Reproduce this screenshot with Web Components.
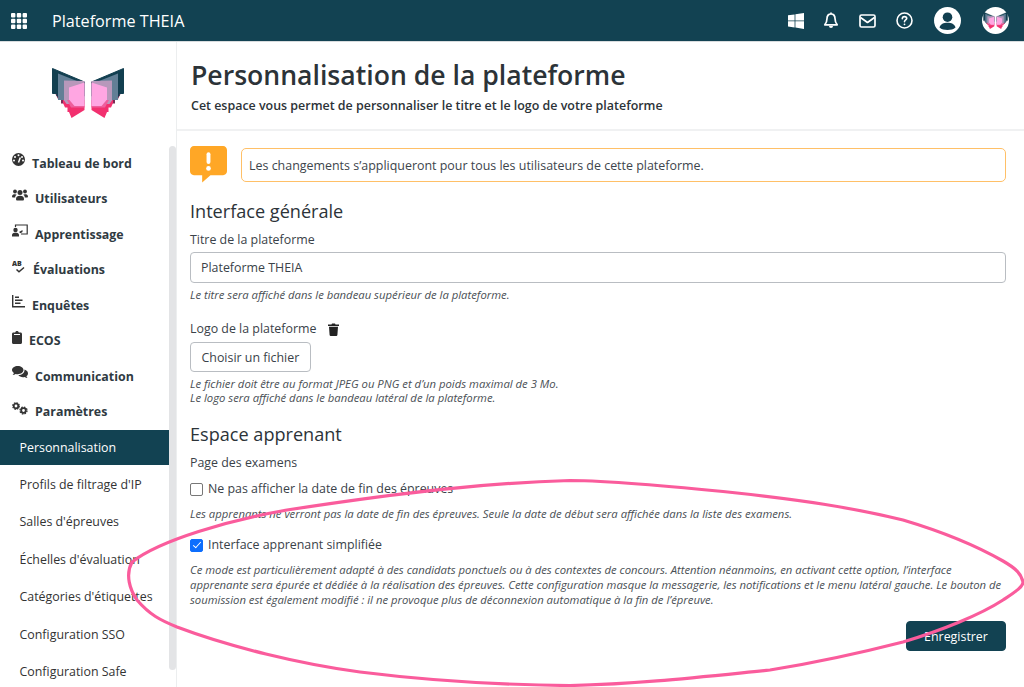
<!DOCTYPE html>
<html lang="fr"><head><meta charset="utf-8"><title>Plateforme THEIA</title>
<style>
html,body{margin:0;padding:0;height:687px;overflow:hidden;background:#fff;font-family:"Open Sans",sans-serif;color:#333}
</style></head><body>
<theia-app></theia-app>
<script>
const WING=`<path fill="#7a2a55" d="M55 93 58 99H61V103.500H66V93Z"/>
<path fill="#f2306f" d="M63 103 65 107.500H67.500V112H69L71.500 118 84.500 110V100H63Z"/>
<path fill="#123f50" stroke="#123f50" stroke-width="1" stroke-linejoin="round" d="M52.500 68.500 84.500 82V96H57V93.500H52.500Z"/>
<path fill="#627f96" d="M58 73.500 84.500 84V100H58Z"/>
<path fill="#b898bb" d="M64 80.500 84.500 81V104H66.500L64 100.500Z"/>
<path fill="#ee5f9d" d="M67 100 71 107.500H84.500V100Z"/>
<path fill="#ffa6e2" d="M69 87.500 84.500 82.500V106H74.500L69 99.500Z"/>`;
const BUTTERFLY=`<g>${WING}</g><g transform="translate(176 0) scale(-1 1)">${WING}</g>`;
const ICONS={
grid:'<svg width="16" height="16" viewBox="0 0 16 16" fill="#fff"><rect x="0" y="0" width="4.400" height="4.400" rx="1"/><rect x="5.800" y="0" width="4.400" height="4.400" rx="1"/><rect x="11.600" y="0" width="4.400" height="4.400" rx="1"/><rect x="0" y="5.800" width="4.400" height="4.400" rx="1"/><rect x="5.800" y="5.800" width="4.400" height="4.400" rx="1"/><rect x="11.600" y="5.800" width="4.400" height="4.400" rx="1"/><rect x="0" y="11.600" width="4.400" height="4.400" rx="1"/><rect x="5.800" y="11.600" width="4.400" height="4.400" rx="1"/><rect x="11.600" y="11.600" width="4.400" height="4.400" rx="1"/></svg>',
windows:'<svg width="16" height="16" viewBox="0 0 16 16" fill="#fff"><path d="M0 2.300 6.600 1.400V7.400H0ZM7.400 1.300 16 0V7.400H7.400ZM0 8.300H6.600V14.400L0 13.500ZM7.400 8.300H16V16L7.400 14.600Z"/></svg>',
bell:'<svg width="16" height="17" viewBox="0 0 16 17" fill="none" stroke="#fff" stroke-width="1.700" stroke-linejoin="round"><path d="M8 2C5.200 2 4 4.200 4 6.500 4 9.500 3.200 11 1.800 12.800H14.200C12.800 11 12 9.500 12 6.500 12 4.200 10.800 2 8 2Z"/><path d="M8 .5V2"/><path fill="#fff" stroke="none" d="M6 14H10A2 2 0 0 1 6 14Z"/></svg>',
mail:'<svg width="17" height="14" viewBox="0 0 17 14" fill="none" stroke="#fff" stroke-width="1.700" stroke-linejoin="round"><rect x="1" y="1" width="15" height="12" rx="1.500"/><path d="M1.500 3.500 8.500 8.500 15.500 3.500"/></svg>',
help:'<svg width="17" height="17" viewBox="0 0 17 17" fill="none" stroke="#fff" stroke-width="1.600"><circle cx="8.500" cy="8.500" r="7.500"/><path stroke-linecap="round" d="M6.300 6.700C6.300 5.300 7.300 4.600 8.500 4.600S10.700 5.400 10.700 6.500C10.700 8 8.500 8 8.500 9.800"/><circle cx="8.500" cy="12.300" r=".9" fill="#fff" stroke="none"/></svg>',
user:'<svg width="27" height="27" viewBox="0 0 27 27"><circle cx="13.500" cy="13.500" r="13.500" fill="#fff"/><circle cx="13.500" cy="10.200" r="4.800" fill="#123f50"/><path fill="#123f50" d="M5.500 20.500C6.500 17 9.500 15.800 13.500 15.800S20.500 17 21.500 20.500C19.500 22.300 16.700 23 13.500 23S7.500 22.300 5.500 20.500Z"/></svg>',
logoRound:`<svg width="27" height="27" viewBox="0 0 27 27"><circle cx="13.500" cy="13.500" r="13.500" fill="#fff"/><g transform="translate(-16.400 -18.200) scale(.34)">${BUTTERFLY}</g></svg>`,
gauge:'<svg width="13" height="13" viewBox="0 0 13 13"><circle cx="6.500" cy="6.500" r="6.500" fill="#333"/><g fill="#fff"><circle cx="6.500" cy="2.300" r="1"/><circle cx="3" cy="4" r="1"/><circle cx="10" cy="4" r="1"/><circle cx="2" cy="7.500" r="1"/><circle cx="11" cy="7.500" r="1"/></g><path stroke="#fff" stroke-width="1.500" d="M6.500 9.500 8.300 4.500"/></svg>',
users:'<svg width="16" height="13" viewBox="0 0 16 13" fill="#333"><circle cx="3" cy="2.500" r="1.900"/><circle cx="13" cy="2.500" r="1.900"/><circle cx="8" cy="3.500" r="2.500"/><path d="M0 7.500C0 5.800 1.300 5.200 3 5.200 3.800 5.200 4.300 5.400 4.700 5.700 3.700 6.300 3.300 7 3.200 8.500H.8C.3 8.500 0 8.100 0 7.500ZM16 7.500C16 5.800 14.700 5.200 13 5.200 12.200 5.200 11.700 5.400 11.300 5.700 12.300 6.300 12.700 7 12.800 8.500H15.200C15.700 8.500 16 8.100 16 7.500ZM4 10C4 7.500 5.500 6.700 8 6.700S12 7.500 12 10C12 11 11.500 11.500 10.500 11.500H5.500C4.500 11.500 4 11 4 10Z"/></svg>',
learn:'<svg width="16" height="13" viewBox="0 0 16 13"><path fill="none" stroke="#333" stroke-width="1.200" d="M3.500 3V1H15.200V10H9"/><circle cx="3.500" cy="6" r="2.200" fill="#333"/><path fill="#333" d="M0 12.500V11C0 9.300 1.500 8.700 3.500 8.700S7 9.300 7 11V12.500ZM7 8 10.500 6V8L8.500 9.200Z"/></svg>',
ab:'<svg width="14" height="13" viewBox="0 0 14 13"><text x="0" y="6" font-family="Open Sans" font-size="7" font-weight="800" fill="#333">AB</text><path fill="none" stroke="#333" stroke-width="1.500" d="M4.500 9.500 7 11.800 12 7.500"/></svg>',
chart:'<svg width="13" height="13" viewBox="0 0 13 13" fill="#333"><path d="M0 0H1.400V11H13V12.400H0Z"/><rect x="3" y="1.500" width="4" height="1.500"/><rect x="3" y="4.500" width="7.500" height="1.500"/><rect x="3" y="7.500" width="5.500" height="1.500"/></svg>',
clip:'<svg width="10" height="13" viewBox="0 0 10 13" fill="#333"><path d="M1.500 1.500H3.200C3.400.5 4.100 0 5 0S6.600.5 6.800 1.500H8.500C9.400 1.500 10 2.100 10 3V11.500C10 12.400 9.400 13 8.500 13H1.500C.6 13 0 12.400 0 11.500V3C0 2.100.6 1.500 1.500 1.500Z"/><rect x="2" y="3" width="6" height="1" fill="#fff"/></svg>',
chat:'<svg width="16" height="13" viewBox="0 0 16 13" fill="#333"><path d="M5.800 0C9 0 11.500 1.800 11.500 4.100S9 8.200 5.800 8.200C5 8.200 4.300 8.100 3.700 7.900 2.800 8.500 1.700 8.900.6 8.900 1.300 8.300 1.800 7.600 1.900 6.900.7 6.200 0 5.200 0 4.100 0 1.800 2.600 0 5.800 0Z"/><path d="M12.500 3.600C14.600 4.300 16 5.700 16 7.400 16 8.500 15.400 9.400 14.400 10.100 14.500 10.800 14.900 11.400 15.500 12 14.500 12 13.500 11.600 12.700 11 12.200 11.200 11.600 11.200 11 11.200 9 11.200 7.200 10.400 6.300 9.300 9.900 9.200 12.800 7 12.500 3.600Z"/></svg>',
cogs:'<svg width="16" height="13" viewBox="0 0 16 13" fill="none" stroke="#333"><circle cx="4" cy="4" r="2.300" stroke-width="1.800"/><circle cx="4" cy="4" r="3.300" stroke-width="1.200" stroke-dasharray="1.500 1.100"/><circle cx="11.500" cy="8.500" r="2.300" stroke-width="1.800"/><circle cx="11.500" cy="8.500" r="3.500" stroke-width="1.300" stroke-dasharray="1.600 1.150"/></svg>',
trash:'<svg width="11" height="13" viewBox="0 0 11 13" fill="#222"><path d="M0 1.500H3.500L4 .5H7L7.500 1.500H11V3H0ZM1 3.800H10L9.400 12C9.300 12.700 8.900 13 8.300 13H2.700C2.100 13 1.700 12.700 1.600 12Z"/></svg>',
alert:'<svg width="38" height="38" viewBox="0 0 38 38"><path fill="#ffa726" d="M4 0H34C36.200 0 38 1.800 38 4V26C38 28.200 36.200 30 34 30H21L12.500 37.500V30H4C1.800 30 0 28.200 0 26V4C0 1.800 1.800 0 4 0Z"/><rect x="17" y="6.500" width="4" height="12" rx="2" fill="#fff"/><circle cx="19" cy="23" r="2.400" fill="#fff"/></svg>'
};
function el(name,html,css){
  customElements.define(name,class extends HTMLElement{
    constructor(){super();const r=this.attachShadow({mode:'open'});r.innerHTML='<style>'+css+'</style>'+(typeof html==='function'?html(this):html);}
  });
}
el('top-bar',()=>`<div class="l">${ICONS.grid}<span>Plateforme THEIA</span></div><div class="r"><i style="width:16px">${ICONS.windows}</i><i style="margin-left:19px;width:16px">${ICONS.bell}</i><i style="margin-left:20px;width:17px">${ICONS.mail}</i><i style="margin-left:20px;width:17px">${ICONS.help}</i><i style="margin-left:21px;width:27px">${ICONS.user}</i><i style="margin-left:21px;width:27px">${ICONS.logoRound}</i></div>`,
`:host{display:flex;justify-content:space-between;align-items:center;height:41px;background:#124252;color:#fff;padding:0 15px 0 11px;box-sizing:border-box;box-shadow:0 1px 0 #d8dcde}
.l{display:flex;align-items:center}.l span{margin-left:25px;font-size:16.200px;font-weight:500}
.r{display:flex;align-items:center}i{display:flex;justify-content:center}svg{display:block}`);
el('theia-logo',`<svg width="176" height="120" viewBox="0 42 176 120">${BUTTERFLY}</svg>`,
`:host{display:block;height:120px}svg{display:block}`);
el('nav-item',()=>`<span class="ic"><slot name="icon"></slot></span><span class="t"><slot></slot></span>`,
`:host{display:flex;align-items:center;height:35.500px;padding-left:12px;font-size:12.400px;font-weight:700;color:#2f3a42}
.t{margin-left:7px}.ic{display:flex;margin-top:-3px}`);
el('sub-item',`<slot></slot>`,
`:host{display:flex;align-items:center;height:37.500px;padding-left:19.500px;font-size:12.400px;color:#333;white-space:nowrap}
:host([active]){background:#124252;color:#fff;height:35px;margin-bottom:1px}`);
el('side-bar',`<theia-logo></theia-logo><div class="nav"><slot></slot></div><div class="thumb"></div>`,
`:host{display:block;position:relative;width:176px;flex:none;overflow:hidden;height:645px;box-sizing:border-box}
.nav{margin-top:-16.500px;width:169px}
.thumb{position:absolute;left:169px;top:104px;width:7px;height:524px;background:#e3e4e6;border-radius:4px}`);
el('page-head',`<h1><slot></slot></h1><p><slot name="sub"></slot></p>`,
`:host{display:block;padding:16px 14px 17px 14px;border-bottom:2px solid #f0f1f2;height:89px;box-sizing:border-box}
h1{margin:0;font-size:26.600px;font-weight:600;line-height:34px;color:#2c3338}p{margin:5px 0 0;font-size:12.450px;font-weight:600;line-height:18px;color:#2c3338}`);
el('alert-box',()=>`<div class="a">${ICONS.alert}</div><div class="b"><slot></slot></div>`,
`:host{display:flex;align-items:flex-start;gap:14px;margin-top:15px}.a{width:37px;height:38px}.a svg{display:block;width:37px;height:37px}
.b{flex:1;height:34px;margin-top:2px;box-sizing:border-box;border:1px solid #ffc067;border-radius:5px;padding:0 7px;display:flex;align-items:center;font-size:12.450px;color:#3d454c}`);
el('sec-title',`<slot></slot>`,`:host{display:block;font-size:18.100px;line-height:24px;color:#2c3338}`);
el('field-label',`<slot></slot>`,`:host{display:block;font-size:12.400px;line-height:18px;color:#3a4249}`);
el('help-text',`<slot></slot>`,`:host{display:block;font-size:11.300px;line-height:14px;font-style:italic;color:#4a4f55}`);
el('text-input',`<input aria-label="Titre" value="Plateforme THEIA">`,`:host{display:block}input{display:block;width:100%;box-sizing:border-box;height:31px;border:1px solid #b9bdc2;border-radius:4px;padding:0 10px;font:12.400px "Open Sans",sans-serif;color:#3a4249;background:#fff;outline:0}`);
el('check-row',`<span class="c"></span><span class="t"><slot></slot></span>`,
`:host{display:flex;align-items:center;font-size:12.400px;line-height:18px;color:#3a4249}
.c{width:11px;height:11px;border:1px solid #777;border-radius:2px;background:#fff;margin-right:5px;flex:none;position:relative}
:host([checked]) .c{background:#0d6efd;border-color:#0d6efd}
:host([checked]) .c::after{content:"";position:absolute;left:3.500px;top:.5px;width:3px;height:7px;border:solid #fff;border-width:0 1.600px 1.600px 0;transform:rotate(42deg)}`);
el('action-btn',`<slot></slot>`,`:host{display:inline-flex;align-items:center;justify-content:center;box-sizing:border-box;height:30px;border:1px solid #b9bdc2;border-radius:4px;font-size:12.400px;color:#3a4249;padding:0 10.500px;background:#fff}
:host([primary]){background:#124252;border-color:#124252;color:#fff;width:100px;padding:0;height:30px}`);
el('theia-app',()=>`<top-bar></top-bar>
<div class="body">
<side-bar>
<nav-item><span slot="icon" class="ic">${ICONS.gauge}</span>Tableau de bord</nav-item>
<nav-item><span slot="icon">${ICONS.users}</span>Utilisateurs</nav-item>
<nav-item><span slot="icon">${ICONS.learn}</span>Apprentissage</nav-item>
<nav-item><span slot="icon">${ICONS.ab}</span>Évaluations</nav-item>
<nav-item><span slot="icon">${ICONS.chart}</span>Enquêtes</nav-item>
<nav-item><span slot="icon">${ICONS.clip}</span>ECOS</nav-item>
<nav-item><span slot="icon">${ICONS.chat}</span>Communication</nav-item>
<nav-item><span slot="icon">${ICONS.cogs}</span>Paramètres</nav-item>
<sub-item active>Personnalisation</sub-item>
<sub-item>Profils de filtrage d'IP</sub-item>
<sub-item>Salles d'épreuves</sub-item>
<sub-item>Échelles d'évaluation</sub-item>
<sub-item>Catégories d'étiquettes</sub-item>
<sub-item>Configuration SSO</sub-item>
<sub-item>Configuration Safe</sub-item>
</side-bar>
<main>
<page-head>Personnalisation de la plateforme<span slot="sub">Cet espace vous permet de personnaliser le titre et le logo de votre plateforme</span></page-head>
<div class="content">
<alert-box>Les changements s’appliqueront pour tous les utilisateurs de cette plateforme.</alert-box>
<sec-title style="margin-top:15px">Interface générale</sec-title>
<field-label style="margin-top:8px">Titre de la plateforme</field-label>
<text-input style="margin-top:3px"></text-input>
<help-text style="margin-top:5px">Le titre sera affiché dans le bandeau supérieur de la plateforme.</help-text>
<div class="logo-row"><field-label>Logo de la plateforme</field-label>${ICONS.trash}</div>
<action-btn style="margin-top:4px">Choisir un fichier</action-btn>
<help-text style="margin-top:5px">Le fichier doit être au format JPEG ou PNG et d’un poids maximal de 3 Mo.<br>Le logo sera affiché dans le bandeau latéral de la plateforme.</help-text>
<sec-title style="margin-top:17px">Espace apprenant</sec-title>
<field-label style="margin-top:8px">Page des examens</field-label>
<check-row style="margin-top:8px">Ne pas afficher la date de fin des épreuves</check-row>
<help-text style="margin-top:9px">Les apprenants ne verront pas la date de fin des épreuves. Seule la date de début sera affichée dans la liste des examens.</help-text>
<check-row checked style="margin-top:15px">Interface apprenant simplifiée</check-row>
<help-text style="margin-top:8px;line-height:15px">Ce mode est particulièrement adapté à des candidats ponctuels ou à des contextes de concours. Attention néanmoins, en activant cette option, l’interface apprenante sera épurée et dédiée à la réalisation des épreuves. Cette configuration masque la messagerie, les notifications et le menu latéral gauche. Le bouton de soumission est également modifié : il ne provoque plus de déconnexion automatique à la fin de l’épreuve.</help-text>
<div class="actions"><action-btn primary>Enregistrer</action-btn></div>
</div>
</main>
</div>
<svg class="ring" width="1024" height="687" viewBox="0 0 1024 687" aria-hidden="true"><path d="M570 480.500C490 483 410 491 287 510 230 520 160 540 132 562 125 575 130 590 137 600 150 615 160 620 177 627 230 647 300 664 360 672 440 682 510 685 570 685.500 640 684 700 677 770 670 820 662 860 653 903 642 940 631 980 615 1003 600 1015 592 1023 587 1023 582 1021 573 1015 568 1003 561 975 545 940 531 903 520 850 507 800 500 737 493 680 487 620 481 570 480.500Z" fill="none" stroke="#fa5c9c" stroke-width="3.200"/></svg>`,
`:host{display:block;position:relative;width:1024px;height:687px;overflow:hidden}
.body{display:flex;height:646px;margin-top:1px}
main{flex:1;min-width:0;border-left:1px solid #eceeef}
.content{padding:0 18px 0 13px}
.logo-row{display:flex;align-items:center;gap:12px;margin-top:18px}
.logo-row svg{display:block}
.actions{display:flex;justify-content:flex-end;margin-top:14px}
.ring{position:absolute;left:0;top:0;pointer-events:none}`);
</script>
</body></html>
